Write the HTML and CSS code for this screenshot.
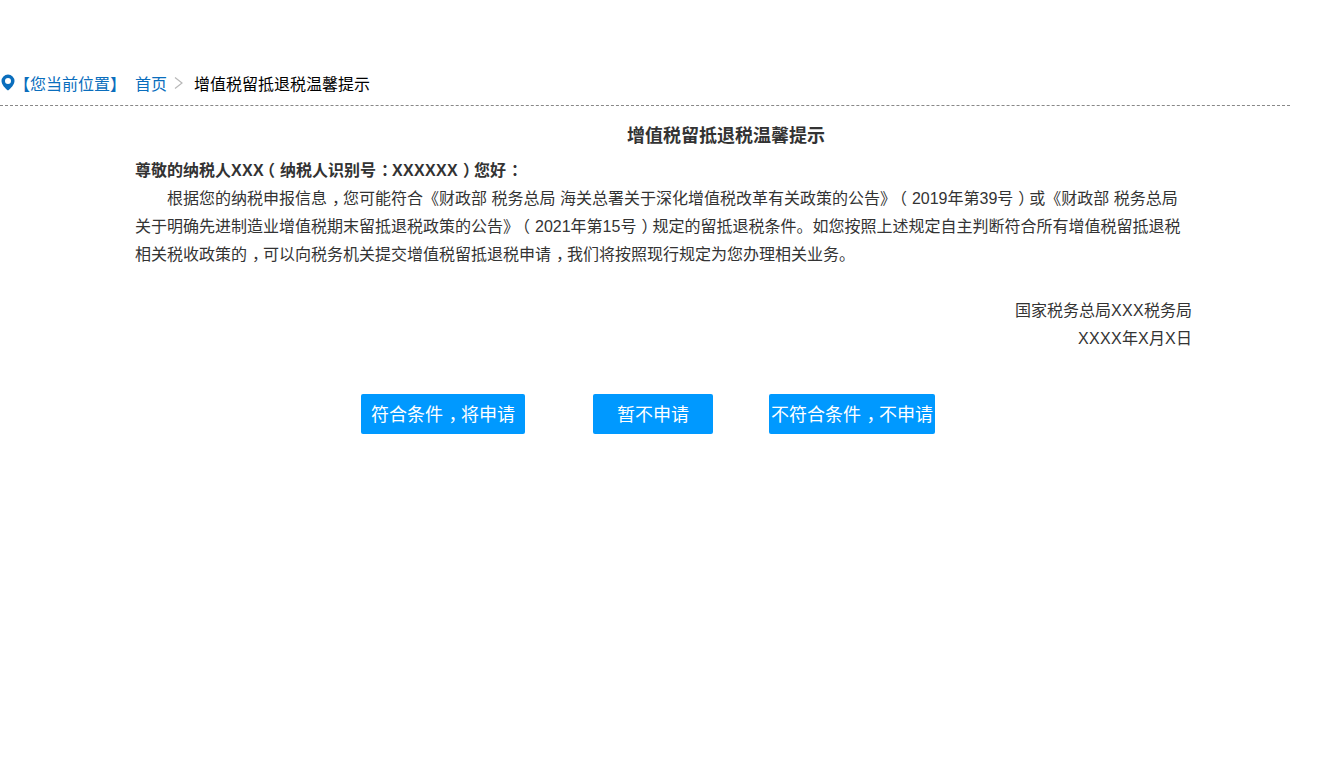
FILE: index.html
```html
<!DOCTYPE html>
<html lang="zh-CN">
<head>
<meta charset="utf-8">
<title>增值税留抵退税温馨提示</title>
<link rel="stylesheet" href="styles.css">
</head>
<body>
<div class="page">
  <nav class="crumbs">
    <svg class="pin" width="14" height="17" viewBox="0 0 14 17"><path fill="#0a6ebd" fill-rule="evenodd" d="M7 .5A6.500 6.500 0 0 1 13.500 7c0 3.600-3.900 7.600-6.500 9.500C4.400 14.600.5 10.600.5 7A6.500 6.500 0 0 1 7 .5zM7 4a3 3 0 1 0 0 6 3 3 0 0 0 0-6z"/></svg>
    <span class="here">【您当前位置】</span>
    <a class="home">首页</a>
    <svg class="sep" width="9" height="14" viewBox="0 0 9 14"><path d="M1 1.500l7 5.500-7 5.500" fill="none" stroke="#b8b8b8" stroke-width="1.200"/></svg>
    <span class="current">增值税留抵退税温馨提示</span>
  </nav>
  <main class="notice">
    <h1 class="title">增值税留抵退税温馨提示</h1>
    <p class="greet">尊敬的纳税人<span class="lat">XXX</span><span class="lp">（</span>纳税人识别号<span class="mid">：</span><span class="lat">XXXXXX</span><span class="rp">）</span>您好<span class="mid">：</span></p>
    <p class="body">根据您的纳税申报信息<span class="mid">，</span>您可能符合《财政部 税务总局 海关总署关于深化增值税改革有关政策的公告》<span class="lp">（</span>2019年第39号<span class="rp">）</span>或《财政部 税务总局关于明确先进制造业增值税期末留抵退税政策的公告》<span class="lp">（</span>2021年第15号<span class="rp">）</span>规定的留抵退税条件。如您按照上述规定自主判断符合所有增值税留抵退税相关税收政策的<span class="mid">，</span>可以向税务机关提交增值税留抵退税申请<span class="mid">，</span>我们将按照现行规定为您办理相关业务。</p>
    <p class="sign">国家税务总局<span class="lat">XXX</span>税务局</p>
    <p class="sign"><span class="lat">XXXX</span>年<span class="lat">X</span>月<span class="lat">X</span>日</p>
    <div class="actions">
      <button class="btn first">符合条件<span class="mid">，</span>将申请</button>
      <button class="btn second">暂不申请</button>
      <button class="btn third">不符合条件<span class="mid">，</span>不申请</button>
    </div>
  </main>
</div>
</body>
</html>
```
FILE: styles.css
```css
* { box-sizing: border-box; }
html, body { margin: 0; padding: 0; background: #fff; }
body { font-family: "Liberation Sans", "Noto Sans CJK SC", sans-serif; font-size: 16px; color: #333; text-spacing-trim: space-all; }
.page { width: 1290px; padding-top: 66px; height: 757px; }
.crumbs { display: flex; align-items: center; height: 40px; border-bottom: 1px dashed #888; padding-left: 1px; padding-bottom: 6px; white-space: nowrap; }
.pin { flex: none; margin-right: -1px; }
.here, .home { color: #0a6ebd; }
.here { width: 121px; }
.home { width: 32px; }
.sep { margin: 0 11px 0 7px; }
.current { color: #000; }
.notice { width: 1057px; margin-left: 135px; }
.title { margin: 0 0 0 492px; font-size: 18px; line-height: 28px; padding: 16px 0 7px; white-space: nowrap; }
.greet { margin: 0; font-weight: bold; line-height: 28px; }
.body { margin: 0 0 28px; line-height: 28px; text-indent: 32px; }
.sign { margin: 0; text-align: right; line-height: 28px; }
.lat { letter-spacing: .33px; }
.lp, .rp, .mid { display: inline-block; width: 1em; text-align: left; }
.lp { text-indent: -.31em; }
.rp, .mid { text-indent: .31em; }
.actions { display: flex; margin: 41px 0 0 226px; }
.btn { height: 40px; padding: 0 0 2px; border: 0; border-radius: 2px; background: #0099ff; color: #fff; font: inherit; font-size: 18px; white-space: pre; display: block; text-align: center; }
.first { width: 164px; }
.second { width: 120px; margin-left: 68px; }
.third { width: 166px; margin-left: 56px; }
```
